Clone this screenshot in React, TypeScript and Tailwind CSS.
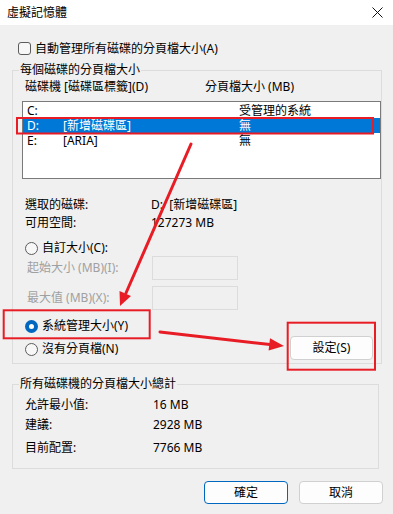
const font = "font-['Noto_Sans','Noto_Sans_CJK_TC',sans-serif]";

const drives = [
  { letter: "C:", label: "", size: "受管理的系統", selected: false },
  { letter: "D:", label: "[新增磁碟區]", size: "無", selected: true },
  { letter: "E:", label: "[ARIA]", size: "無", selected: false },
];

const totals = [
  { label: "允許最小值:", value: "16 MB", h: "h-[16px]" },
  { label: "建議:", value: "2928 MB", h: "h-[16px] mt-[4px]" },
  { label: "目前配置:", value: "7766 MB", h: "h-[18px] mt-[6px]" },
];

const Radio = ({ checked }: { checked?: boolean }) =>
  checked ? (
    <span className="flex h-[13px] w-[13px] items-center justify-center rounded-full bg-[#0067c0]">
      <span className="h-[5px] w-[5px] rounded-full bg-white" />
    </span>
  ) : (
    <span className="h-[13px] w-[13px] rounded-full border border-[#5c5c5c] bg-[#f7f7f7]" />
  );

const Overlay = () => (
  <svg
    className="pointer-events-none absolute left-0 top-0"
    width="393"
    height="514"
    viewBox="0 0 393 514"
  >
    <g fill="none" stroke="#e81c25" strokeWidth="2">
      <rect x="17" y="118" width="356" height="15.5" />
      <rect x="3.7" y="310.3" width="146" height="28" />
      <rect x="287.7" y="322.7" width="87.3" height="47" />
    </g>
    <g stroke="#e81c25" strokeWidth="3" strokeLinecap="round">
      <line x1="191" y1="144" x2="126" y2="293" />
      <line x1="160" y1="332" x2="270" y2="344.5" />
    </g>
    <g fill="#e81c25">
      <polygon points="120,306 131,296 119.5,291" />
      <polygon points="284,346 270,338.2 268.6,350.6" />
    </g>
  </svg>
);

export default function App() {
  return (
    <div
      className={`relative h-[514px] w-[393px] overflow-hidden bg-[#f0f0f0] text-[12px] text-black ${font}`}
    >
      <div className="flex h-[25px] items-center justify-between bg-white pl-[7px] pr-[10px]">
        <span className="leading-[16px]">虛擬記憶體</span>
        <svg width="11" height="11" viewBox="0 0 11 11">
          <path d="M0.5 0.5 L10.5 10.5 M10.5 0.5 L0.5 10.5" stroke="#111" strokeWidth="1" />
        </svg>
      </div>

      <div className="flex flex-col pl-[12px]">
        <div className="mt-[17px] flex h-[13px] items-center pl-[6px]">
          <span className="h-[13px] w-[13px] rounded-[3px] border border-[#5c5c5c] bg-[#f7f7f7]" />
          <span className="ml-[4px] leading-[16px]">自動管理所有磁碟的分頁檔大小(A)</span>
        </div>

        <fieldset className="mt-[7px] w-[367px] border border-[#dcdcdc] pb-[3px]">
          <legend className="ml-[6px] px-[1px] leading-[16px]">每個磁碟的分頁檔大小</legend>
          <div className="mt-[1px] flex h-[16px] items-center pl-[12px] leading-[16px]">
            <span className="w-[180px]">磁碟機 [磁碟區標籤](D)</span>
            <span>分頁檔大小 (MB)</span>
          </div>

          <div className="ml-[9px] mt-[6px] h-[78px] w-[359px] border border-[#7a7a7a] bg-white pt-[1px]">
            {drives.map((d) => (
              <div
                key={d.letter}
                className={`flex h-[15px] items-center pl-[4px] leading-[15px] ${
                  d.selected ? "bg-[#0078d7] text-white" : ""
                }`}
              >
                <span className="w-[36px]">{d.letter}</span>
                <span className="w-[176px]">{d.label}</span>
                <span>{d.size}</span>
              </div>
            ))}
          </div>

          <div className="mt-[17px] flex flex-col pl-[12px] leading-[18px]">
            <div className="flex h-[18px]">
              <span className="w-[126px]">選取的磁碟:</span>
              <span>D:&nbsp; [新增磁碟區]</span>
            </div>
            <div className="flex h-[18px]">
              <span className="w-[126px]">可用空間:</span>
              <span>127273 MB</span>
            </div>
          </div>

          <div className="mt-[8px] flex h-[16px] items-center pl-[12px]">
            <Radio />
            <span className="ml-[4px] leading-[16px]">自訂大小(C):</span>
          </div>

          <div className="flex h-[24px] items-center pl-[14px] text-[#a0a0a0]">
            <span className="w-[125px] leading-[16px]">起始大小 (MB)(I):</span>
            <span className="h-[24px] w-[86px] border border-[#dcdcdc]" />
          </div>
          <div className="mt-[6px] flex h-[24px] items-center pl-[14px] text-[#a0a0a0]">
            <span className="w-[125px] leading-[16px]">最大值 (MB)(X):</span>
            <span className="h-[24px] w-[86px] border border-[#dcdcdc]" />
          </div>

          <div className="flex items-end justify-between pl-[12px] pr-[8px]">
            <div className="flex flex-col gap-[7px] pb-[3px] pt-[8px]">
              <div className="flex h-[16px] items-center">
                <Radio checked />
                <span className="ml-[4px] leading-[16px]">系統管理大小(Y)</span>
              </div>
              <div className="flex h-[16px] items-center">
                <Radio />
                <span className="ml-[4px] leading-[16px]">沒有分頁檔(N)</span>
              </div>
            </div>
            <button className="h-[24px] w-[83px] rounded-[4px] border border-[#d0d0d0] bg-[#fdfdfd] leading-[16px]">
              設定(S)
            </button>
          </div>
        </fieldset>

        <fieldset className="mt-[12px] w-[367px] border border-[#dcdcdc] pb-[11px]">
          <legend className="ml-[6px] px-[1px] leading-[16px]">所有磁碟機的分頁檔大小總計</legend>
          <div className="mt-[5px] flex flex-col pl-[12px]">
            {totals.map((t) => (
              <div key={t.label} className={`flex items-center leading-[16px] ${t.h}`}>
                <span className="w-[128px]">{t.label}</span>
                <span>{t.value}</span>
              </div>
            ))}
          </div>
        </fieldset>

        <div className="mt-[12px] flex w-[371px] justify-end gap-[11px]">
          <button className="h-[23px] w-[84px] rounded-[4px] border border-[#0067c0] bg-[#fdfdfd] leading-[16px]">
            確定
          </button>
          <button className="h-[23px] w-[84px] rounded-[4px] border border-[#d0d0d0] bg-[#fdfdfd] leading-[16px]">
            取消
          </button>
        </div>
      </div>

      <Overlay />
    </div>
  );
}
